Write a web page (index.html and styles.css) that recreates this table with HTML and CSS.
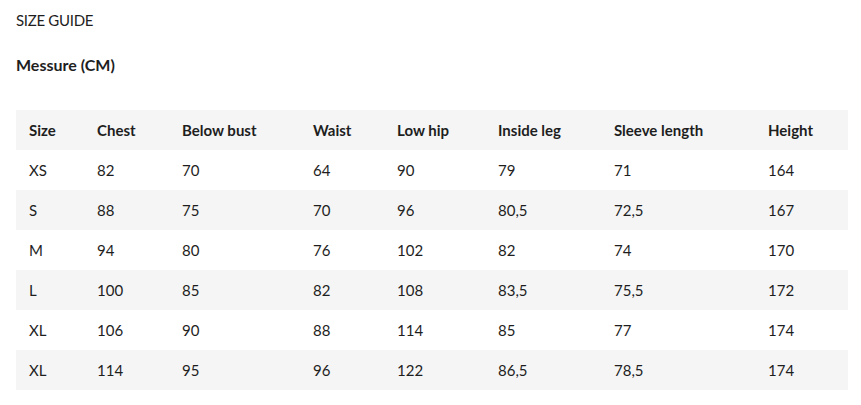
FILE: index.html
```html
<!DOCTYPE html>
<html>
<head>
<meta charset="utf-8">
<link rel="stylesheet" href="styles.css">
</head>
<body>
<div class="page">
  <div class="title">SIZE GUIDE</div>
  <div class="subtitle">Messure (CM)</div>
  <table class="sizes">
    <colgroup>
      <col class="c1"><col class="c2"><col class="c3"><col class="c4"><col class="c5"><col class="c6"><col class="c7"><col class="c8">
    </colgroup>
    <thead>
      <tr><th>Size</th><th>Chest</th><th>Below bust</th><th>Waist</th><th>Low hip</th><th>Inside leg</th><th>Sleeve length</th><th>Height</th></tr>
    </thead>
    <tbody>
      <tr><td>XS</td><td>82</td><td>70</td><td>64</td><td>90</td><td>79</td><td>71</td><td>164</td></tr>
      <tr><td>S</td><td>88</td><td>75</td><td>70</td><td>96</td><td>80,5</td><td>72,5</td><td>167</td></tr>
      <tr><td>M</td><td>94</td><td>80</td><td>76</td><td>102</td><td>82</td><td>74</td><td>170</td></tr>
      <tr><td>L</td><td>100</td><td>85</td><td>82</td><td>108</td><td>83,5</td><td>75,5</td><td>172</td></tr>
      <tr><td>XL</td><td>106</td><td>90</td><td>88</td><td>114</td><td>85</td><td>77</td><td>174</td></tr>
      <tr><td>XL</td><td>114</td><td>95</td><td>96</td><td>122</td><td>86,5</td><td>78,5</td><td>174</td></tr>
    </tbody>
  </table>
</div>
</body>
</html>
```
FILE: styles.css
```css
html, body {
  margin: 0;
  padding: 0;
  background: #fff;
}
body {
  font-family: Lato, "Open Sans", sans-serif;
  color: #1e1e1e;
}
.page {
  padding: 10px 13px 0 16px;
}
.title {
  font-size: 15px;
  line-height: 20px;
  letter-spacing: -0.3px;
}
.subtitle {
  margin-top: 25px;
  font-size: 16px;
  font-weight: 700;
  line-height: 20px;
}
.sizes {
  margin-top: 35px;
  width: 832px;
  border-collapse: collapse;
  table-layout: fixed;
  font-size: 15px;
}
.c1 { width: 68px; }
.c2 { width: 85px; }
.c3 { width: 131px; }
.c4 { width: 84px; }
.c5 { width: 101px; }
.c6 { width: 116px; }
.c7 { width: 154px; }
.c8 { width: 93px; }
.sizes th, .sizes td {
  height: 40px;
  padding: 0 0 0 13px;
  text-align: left;
  vertical-align: middle;
}
.sizes th {
  font-weight: 700;
}
.sizes thead tr {
  background: #f5f5f5;
}
.sizes tbody tr:nth-child(even) {
  background: #f5f5f5;
}
```
